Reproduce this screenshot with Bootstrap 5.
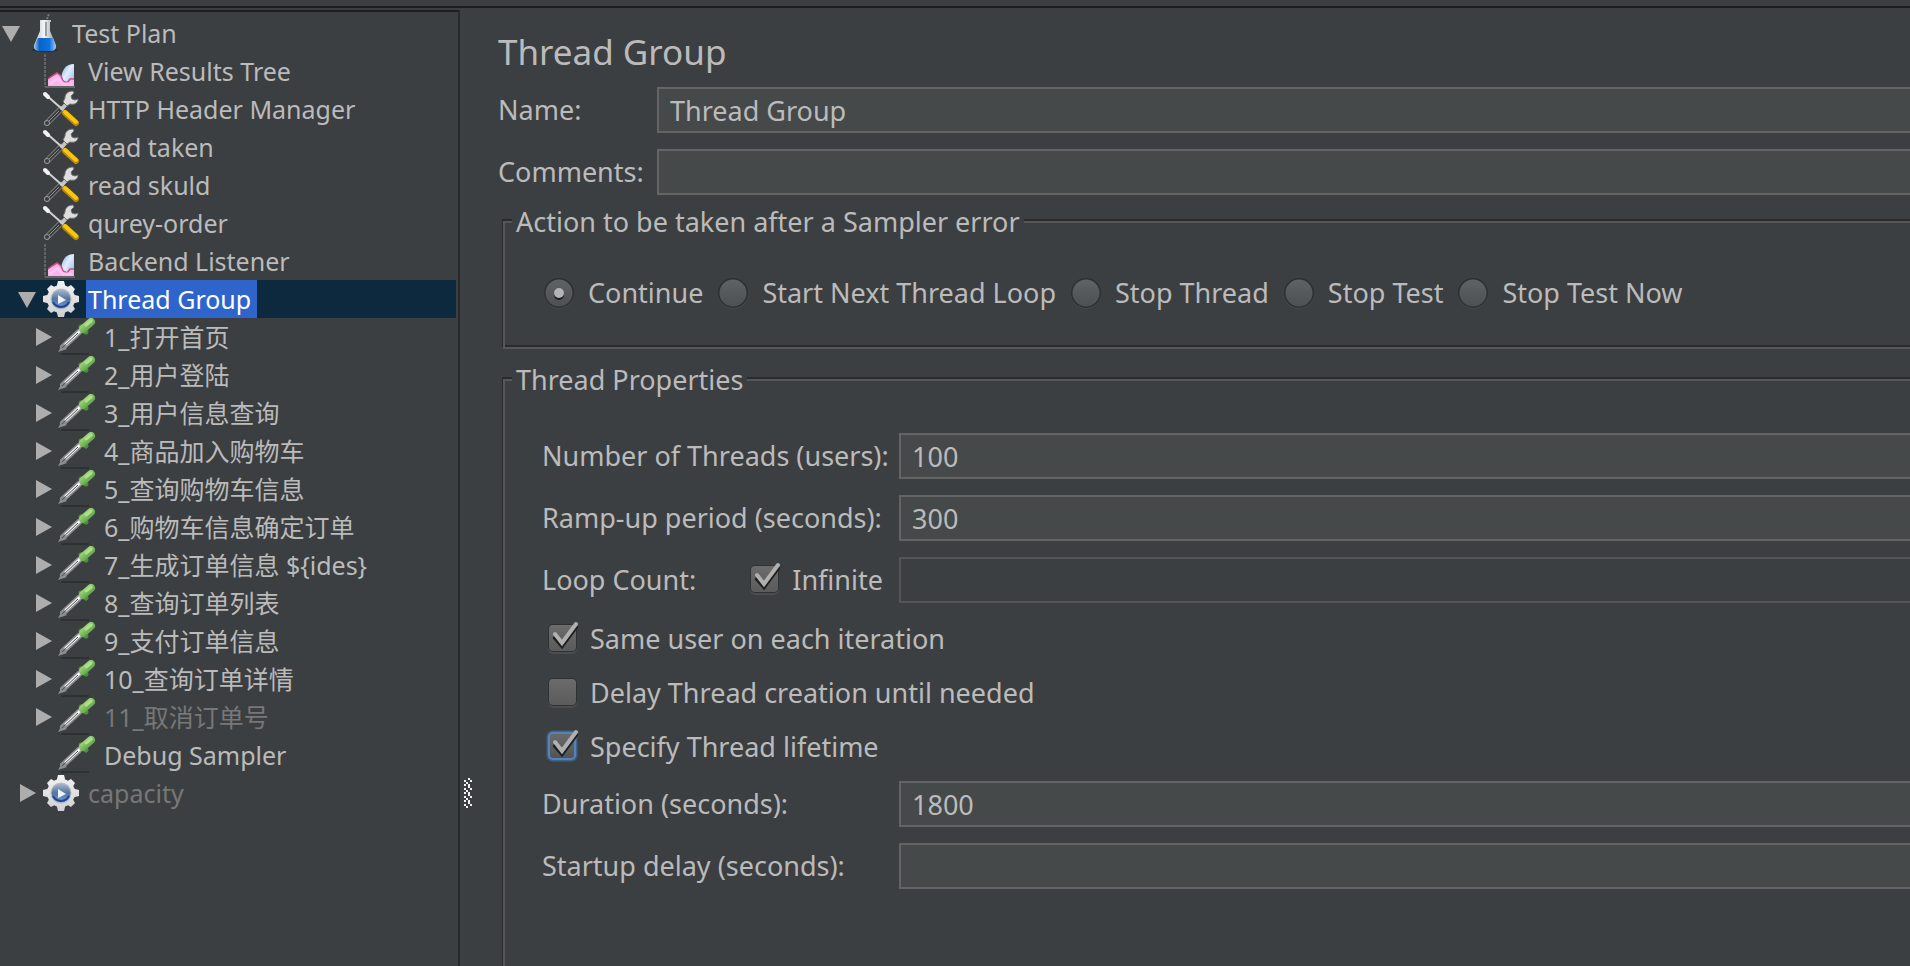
<!DOCTYPE html>
<html lang="en" data-bs-theme="dark">
<head>
<meta charset="utf-8">
<meta name="viewport" content="width=device-width, initial-scale=1">
<title>Thread Group</title>
<link href="https://cdn.jsdelivr.net/npm/bootstrap@5.3.0/dist/css/bootstrap.min.css" rel="stylesheet">
<style>
  :root { --panel: #3c3f41; --ink: #bbbbbb; --field: #45494a; --edge: #646464; --dark: #2b2b2b; --light: #555759; }
  body { background: var(--panel); color: var(--ink); font: 27px/32px "Noto Sans", "Noto Sans CJK SC", sans-serif; }
  .top-rule { height: 8px; border-bottom: 2px solid #1e1e1e; }
  .tree-pane { flex: 0 0 460px; border-top: 2px solid #1e1e1e; border-right: 2px solid #27292a; margin-top: 2px; padding: 2px 2px 0 0; font-size: 25px; }
  .node { height: 38px; }
  .lv1 { padding-left: 16px; }
  .lv2 { padding-left: 32px; }
  .twisty { width: 26px; height: 38px; flex: none; fill: #adadad; }
  .glyph { width: 38px; height: 38px; flex: none; margin-right: 6px; }
  .node-text { padding: 3px 6px 3px 2px; white-space: nowrap; }
  .picked { background: #0d293e; }
  .picked .node-text { background: #2f65ca; color: #fff; }
  .off { color: #777777; }
  .divider { flex: 0 0 38px; padding: 770px 0 0 4px; }
  .divider svg { display: block; }
  h1 { color: var(--ink); font-size: 35px; line-height: 44px; margin: 0 0 13px; font-weight: 400; }
  .form-control, .form-control:disabled { height: 46px; background: var(--field); border: 2px solid var(--edge); border-right: 0; border-radius: 0; color: var(--ink); font-size: 27px; line-height: 32px; padding: 0 11px; }
  .form-control:disabled { background: var(--panel); border-color: #555555; }
  .head-label { flex: 0 0 159px; }
  .prop-label { flex: 0 0 357px; white-space: nowrap; }
  .stack { display: flex; flex-direction: column; gap: 16px; }
  .settings { padding-top: 22px; }
  .etched { margin: 7px 0 0 4px; border-top: 2px solid var(--dark); border-left: 1px solid var(--dark); border-bottom: 2px solid var(--light); box-shadow: inset 2px 2px var(--light), inset 0 -2px var(--dark); }
  .etched.open-end { margin-top: 11px; border-bottom: 0; box-shadow: inset 2px 2px var(--light); }
  .etched legend { float: none; width: auto; margin: 0 0 0 9px; padding: 4px 4px 0; font-size: 27px; line-height: 32px; background: var(--panel); }
  .actions { padding: 34px 0 33px 41px; gap: 15px; }
  .choice { gap: 12px; white-space: nowrap; }
  .actions .choice { gap: 14px; }
  .props { padding: 37px 0 40px 39px; }
  .checks { padding: 9px 0 7px 4px; }
  .checks .choice { height: 54px; }
  input[type=radio], input[type=checkbox] { appearance: none; flex: none; margin: 0; }
  input[type=radio] { width: 30px; height: 42px; background: url("data:image/svg+xml,%3Csvg xmlns='http://www.w3.org/2000/svg' viewBox='0 0 30 42'%3E%3Cdefs%3E%3ClinearGradient id='g' x2='0' y2='1'%3E%3Cstop stop-color='%23606365'/%3E%3Cstop offset='1' stop-color='%234b5053'/%3E%3C/linearGradient%3E%3C/defs%3E%3Ccircle cx='15' cy='22' r='15' fill='%23484b4d'/%3E%3Ccircle cx='15' cy='21' r='15' fill='%232d2f30'/%3E%3Ccircle cx='15' cy='21' r='13.5' fill='url(%23g)'/%3E%3C/svg%3E"); }
  input[type=radio]:checked { background: url("data:image/svg+xml,%3Csvg xmlns='http://www.w3.org/2000/svg' viewBox='0 0 30 42'%3E%3Cdefs%3E%3ClinearGradient id='g' x2='0' y2='1'%3E%3Cstop stop-color='%23606365'/%3E%3Cstop offset='1' stop-color='%234b5053'/%3E%3C/linearGradient%3E%3C/defs%3E%3Ccircle cx='15' cy='22' r='15' fill='%23484b4d'/%3E%3Ccircle cx='15' cy='21' r='15' fill='%232d2f30'/%3E%3Ccircle cx='15' cy='21' r='13.5' fill='url(%23g)'/%3E%3Ccircle cx='15' cy='23' r='5' fill='%231e1e1e'/%3E%3Ccircle cx='15' cy='21' r='5' fill='%23b4b4b4'/%3E%3C/svg%3E"); }
  input[type=checkbox] { width: 32px; height: 38px; background: url("data:image/svg+xml,%3Csvg xmlns='http://www.w3.org/2000/svg' viewBox='0 0 32 38'%3E%3Cdefs%3E%3ClinearGradient id='g' x2='0' y2='1'%3E%3Cstop stop-color='%236b6b6b'/%3E%3Cstop offset='1' stop-color='%235b5b5b'/%3E%3C/linearGradient%3E%3C/defs%3E%3Crect x='2' y='6' width='29' height='28' rx='5' fill='%234b4d4f'/%3E%3Crect x='2' y='4' width='29' height='28' rx='5' fill='%232f3132'/%3E%3Crect x='3' y='5' width='27' height='26' rx='4' fill='url(%23g)'/%3E%3C/svg%3E"); }
  input[type=checkbox]:checked { background: url("data:image/svg+xml,%3Csvg xmlns='http://www.w3.org/2000/svg' viewBox='0 0 32 38'%3E%3Cdefs%3E%3ClinearGradient id='g' x2='0' y2='1'%3E%3Cstop stop-color='%236b6b6b'/%3E%3Cstop offset='1' stop-color='%235b5b5b'/%3E%3C/linearGradient%3E%3C/defs%3E%3Crect x='2' y='6' width='29' height='28' rx='5' fill='%234b4d4f'/%3E%3Crect x='2' y='4' width='29' height='28' rx='5' fill='%232f3132'/%3E%3Crect x='3' y='5' width='27' height='26' rx='4' fill='url(%23g)'/%3E%3Cg fill='none' stroke-width='4' stroke-linecap='round'%3E%3Cpath d='M9 18l7 8L30 7' stroke='%231e1e1e'/%3E%3Cpath d='M9 14l7 9L30 4' stroke='%23b0b0b0'/%3E%3C/g%3E%3C/svg%3E"); }
  input[type=checkbox].focused { background: url("data:image/svg+xml,%3Csvg xmlns='http://www.w3.org/2000/svg' viewBox='0 0 32 38'%3E%3Cdefs%3E%3ClinearGradient id='g' x2='0' y2='1'%3E%3Cstop stop-color='%236b6b6b'/%3E%3Cstop offset='1' stop-color='%23505356'/%3E%3C/linearGradient%3E%3C/defs%3E%3Crect x='0' y='2' width='32' height='32' rx='7' fill='%233e5066'/%3E%3Crect x='1' y='3' width='30' height='30' rx='6' fill='%233f638c'/%3E%3Crect x='3' y='5' width='26' height='26' rx='4' fill='url(%23g)' stroke='%235583b5' stroke-width='2'/%3E%3Cg fill='none' stroke-width='4' stroke-linecap='round'%3E%3Cpath d='M9 18l7 8L30 7' stroke='%231e1e1e'/%3E%3Cpath d='M9 14l7 9L30 4' stroke='%23b0b0b0'/%3E%3C/g%3E%3C/svg%3E"); }
</style>
</head>
<body class="vh-100 overflow-hidden d-flex flex-column">
<svg class="position-absolute" width="0" height="0" aria-hidden="true">
  <defs>
    <linearGradient id="glass" x2="1"><stop stop-color="#a9b6c4"/><stop offset=".45" stop-color="#f4f6f8"/><stop offset="1" stop-color="#8f9499"/></linearGradient>
    <linearGradient id="liquid" x2="1"><stop stop-color="#9fc6f5"/><stop offset=".25" stop-color="#0a63c4"/><stop offset=".7" stop-color="#0c74dd"/><stop offset="1" stop-color="#a5c8f2"/></linearGradient>
    <linearGradient id="sky" x2="1" y2="1"><stop stop-color="#7fa8e6"/><stop offset=".45" stop-color="#e2eeff"/><stop offset="1" stop-color="#86aee8"/></linearGradient>
    <linearGradient id="metal" gradientUnits="userSpaceOnUse" x1="0" x2="0" y1="0" y2="38"><stop stop-color="#f4f4f4"/><stop offset="1" stop-color="#cfcfcf"/></linearGradient>
    <linearGradient id="lens" x2="0" y2="1"><stop stop-color="#a9b8cf"/><stop offset=".5" stop-color="#54749f"/><stop offset="1" stop-color="#6e9be6"/></linearGradient>
    <linearGradient id="bulb" x2="1" y2="1"><stop stop-color="#a6dc80"/><stop offset="1" stop-color="#5a9f43"/></linearGradient>
  </defs>
  <symbol id="open" viewBox="0 0 26 38"><path d="M2 12h18L11 28z"/></symbol>
  <symbol id="shut" viewBox="0 0 26 38"><path d="M4 10v18l16-9z"/></symbol>
  <symbol id="flask" viewBox="0 0 38 38">
    <ellipse cx="19" cy="36" rx="13" ry="2" fill="#2b2e30"/>
    <path d="M21 5l2-5" stroke="#77797b" stroke-width="2" stroke-dasharray="2 1"/>
    <path d="M14 6h11v2h-1v9l6 14q1 5-4 5H12q-5 0-4-5l6-14V8z" fill="url(#glass)"/>
    <path d="M12 24h15l3 8q0 5-5 5H13q-5 0-5-5z" fill="url(#liquid)"/>
    <path d="M20 8v14" stroke="#9a9fa4" stroke-width="2"/>
  </symbol>
  <symbol id="chart" viewBox="0 0 38 38">
    <path d="M3 2v33" stroke="#626466" stroke-width="2" stroke-dasharray="3 1"/><path d="M3 35h30" stroke="#626466" stroke-width="2"/>
    <path d="M19 28q1-16 13-16v22H21z" fill="url(#sky)"/>
    <path d="M6 34v-7l4-3 5-3 4 3 2 5 4 1 3-3h4v7z" fill="#f5b5ec"/>
    <path d="M6 27l4-3 5-3 4 3 2 5 4 2 3-4h4" fill="none" stroke="#d34a86" stroke-width="1.5"/>
    <path d="M8 32l8-6 5 6h9" fill="none" stroke="#fbc4f2" stroke-width="3"/>
  </symbol>
  <symbol id="tools" viewBox="0 0 38 38">
    <path d="M5 33l14-14" stroke="#858585" stroke-width="6" stroke-linecap="round"/>
    <path d="M6 32l13-13" stroke="#3a3c3d" stroke-width="4" stroke-linecap="round"/>
    <path d="M7 31l10-10" stroke="#8f8f8f" stroke-width="1"/>
    <circle cx="5" cy="33" r="2.5" fill="#3a3c3d" stroke="#9a9a9a"/>
    <path d="M19 20l7-8" stroke="#c4c4c4" stroke-width="4"/>
    <path d="M31 1c-5 0-8 3-8 7l-2 4 4 4 3-2c5 1 8-1 8-5l-3 1-3-1-1-3 3-3z" fill="#dedede" stroke="#707070"/>
    <path d="M3 4l17 15" stroke="#cfcfcf" stroke-width="2" stroke-linecap="round"/><path d="M3 4l3 3" stroke="#f2f2f2" stroke-width="4" stroke-linecap="round"/>
    <path d="M23 23l11 10" stroke="#b8870c" stroke-width="6" stroke-linecap="round"/>
    <path d="M23 22l11 10" stroke="#f8c60f" stroke-width="4" stroke-linecap="round"/>
  </symbol>
  <symbol id="gear" viewBox="0 0 38 38">
    <g fill="url(#metal)"><circle cx="19" cy="19" r="14"/>
      <path d="M16 1h6l2 8H14zM16 37h6l2-8H14zM1 16v6l8 2V14zM37 16v6l-8 2V14z"/>
      <path d="M5 9l4-4 7 4-7 7zM33 9l-4-4-7 4 7 7zM5 29l4 4 7-4-7-7zM33 29l-4 4-7-4 7-7z"/></g>
    <circle cx="19" cy="19" r="10.5" fill="#b9bec6"/><circle cx="19" cy="19" r="9.5" fill="url(#lens)"/>
    <path d="M11 22a9 9 0 0 0 16 0" fill="none" stroke="#1f4688" stroke-width="2"/>
    <path d="M16 15v9l8-4z" fill="#eef3fa"/>
  </symbol>
  <symbol id="dropper" viewBox="0 0 38 38">
    <path d="M3 36h28" stroke="#2e3132" stroke-width="2"/>
    <path d="M5 29l16-15" stroke="#8b8d8e" stroke-width="6" stroke-linecap="round"/>
    <path d="M0 34l4-7 5 4z" fill="#8b8d8e"/>
    <path d="M8 26l14-13" stroke="#f5f5f5" stroke-width="3" stroke-linecap="round"/>
    <path d="M4 30l16-15" stroke="#4a4c4d"/>
    <path d="M23 9l5 5" stroke="#4b9140" stroke-width="5" stroke-linecap="round"/>
    <path d="M25 11l8-7" stroke="url(#bulb)" stroke-width="8" stroke-linecap="round"/>
    <path d="M28 7l5-4" stroke="#aee08c" stroke-width="3" stroke-linecap="round"/>
  </symbol>
</svg>

<div class="top-rule flex-shrink-0"></div>
<div class="d-flex flex-grow-1">
  <nav class="tree-pane" aria-label="Test plan">
    <ul class="list-unstyled m-0">
      <li class="node d-flex align-items-center"><svg class="twisty"><use href="#open"/></svg><svg class="glyph"><use href="#flask"/></svg><span class="node-text">Test Plan</span></li>
      <li class="node lv1 d-flex align-items-center"><span class="twisty"></span><svg class="glyph"><use href="#chart"/></svg><span class="node-text">View Results Tree</span></li>
      <li class="node lv1 d-flex align-items-center"><span class="twisty"></span><svg class="glyph"><use href="#tools"/></svg><span class="node-text">HTTP Header Manager</span></li>
      <li class="node lv1 d-flex align-items-center"><span class="twisty"></span><svg class="glyph"><use href="#tools"/></svg><span class="node-text">read taken</span></li>
      <li class="node lv1 d-flex align-items-center"><span class="twisty"></span><svg class="glyph"><use href="#tools"/></svg><span class="node-text">read skuld</span></li>
      <li class="node lv1 d-flex align-items-center"><span class="twisty"></span><svg class="glyph"><use href="#tools"/></svg><span class="node-text">qurey-order</span></li>
      <li class="node lv1 d-flex align-items-center"><span class="twisty"></span><svg class="glyph"><use href="#chart"/></svg><span class="node-text">Backend Listener</span></li>
      <li class="node lv1 picked d-flex align-items-center"><svg class="twisty"><use href="#open"/></svg><svg class="glyph"><use href="#gear"/></svg><span class="node-text">Thread Group</span></li>
      <li class="node lv2 d-flex align-items-center"><svg class="twisty"><use href="#shut"/></svg><svg class="glyph"><use href="#dropper"/></svg><span class="node-text" lang="zh">1_打开首页</span></li>
      <li class="node lv2 d-flex align-items-center"><svg class="twisty"><use href="#shut"/></svg><svg class="glyph"><use href="#dropper"/></svg><span class="node-text" lang="zh">2_用户登陆</span></li>
      <li class="node lv2 d-flex align-items-center"><svg class="twisty"><use href="#shut"/></svg><svg class="glyph"><use href="#dropper"/></svg><span class="node-text" lang="zh">3_用户信息查询</span></li>
      <li class="node lv2 d-flex align-items-center"><svg class="twisty"><use href="#shut"/></svg><svg class="glyph"><use href="#dropper"/></svg><span class="node-text" lang="zh">4_商品加入购物车</span></li>
      <li class="node lv2 d-flex align-items-center"><svg class="twisty"><use href="#shut"/></svg><svg class="glyph"><use href="#dropper"/></svg><span class="node-text" lang="zh">5_查询购物车信息</span></li>
      <li class="node lv2 d-flex align-items-center"><svg class="twisty"><use href="#shut"/></svg><svg class="glyph"><use href="#dropper"/></svg><span class="node-text" lang="zh">6_购物车信息确定订单</span></li>
      <li class="node lv2 d-flex align-items-center"><svg class="twisty"><use href="#shut"/></svg><svg class="glyph"><use href="#dropper"/></svg><span class="node-text" lang="zh">7_生成订单信息 ${ides}</span></li>
      <li class="node lv2 d-flex align-items-center"><svg class="twisty"><use href="#shut"/></svg><svg class="glyph"><use href="#dropper"/></svg><span class="node-text" lang="zh">8_查询订单列表</span></li>
      <li class="node lv2 d-flex align-items-center"><svg class="twisty"><use href="#shut"/></svg><svg class="glyph"><use href="#dropper"/></svg><span class="node-text" lang="zh">9_支付订单信息</span></li>
      <li class="node lv2 d-flex align-items-center"><svg class="twisty"><use href="#shut"/></svg><svg class="glyph"><use href="#dropper"/></svg><span class="node-text" lang="zh">10_查询订单详情</span></li>
      <li class="node lv2 d-flex align-items-center"><svg class="twisty"><use href="#shut"/></svg><svg class="glyph"><use href="#dropper"/></svg><span class="node-text off" lang="zh">11_取消订单号</span></li>
      <li class="node lv2 d-flex align-items-center"><span class="twisty"></span><svg class="glyph"><use href="#dropper"/></svg><span class="node-text">Debug Sampler</span></li>
      <li class="node lv1 d-flex align-items-center"><svg class="twisty"><use href="#shut"/></svg><svg class="glyph"><use href="#gear"/></svg><span class="node-text off">capacity</span></li>
    </ul>
  </nav>
  <div class="divider">
    <svg width="8" height="30" aria-hidden="true">
      <defs><pattern id="grip" width="8" height="8" patternUnits="userSpaceOnUse"><path fill="#f2f2f2" d="M4 0h2v2h-2zM0 2h2v2h-2zM6 2h2v2h-2zM2 4h2v2h-2zM0 6h2v2h-2zM4 6h2v2h-2z"/></pattern></defs>
      <rect width="8" height="30" fill="url(#grip)"/>
    </svg>
  </div>
  <main class="flex-grow-1 d-flex flex-column" style="min-width:0">
    <form class="settings flex-grow-1 d-flex flex-column">
      <h1>Thread Group</h1>
      <div class="stack">
        <div class="d-flex align-items-center"><label class="head-label" for="name">Name:</label><input id="name" class="form-control" value="Thread Group"></div>
        <div class="d-flex align-items-center"><label class="head-label" for="comments">Comments:</label><input id="comments" class="form-control"></div>
      </div>
      <fieldset class="etched">
        <legend>Action to be taken after a Sampler error</legend>
        <div class="actions d-flex align-items-center">
          <div class="choice d-flex align-items-center"><input type="radio" name="act" id="a1" checked><label for="a1">Continue</label></div>
          <div class="choice d-flex align-items-center"><input type="radio" name="act" id="a2"><label for="a2">Start Next Thread Loop</label></div>
          <div class="choice d-flex align-items-center"><input type="radio" name="act" id="a3"><label for="a3">Stop Thread</label></div>
          <div class="choice d-flex align-items-center"><input type="radio" name="act" id="a4"><label for="a4">Stop Test</label></div>
          <div class="choice d-flex align-items-center"><input type="radio" name="act" id="a5"><label for="a5">Stop Test Now</label></div>
        </div>
      </fieldset>
      <fieldset class="etched open-end flex-grow-1">
        <legend>Thread Properties</legend>
        <div class="props">
          <div class="stack">
            <div class="d-flex align-items-center"><label class="prop-label" for="threads">Number of Threads (users):</label><input id="threads" class="form-control" value="100"></div>
            <div class="d-flex align-items-center"><label class="prop-label" for="ramp">Ramp-up period (seconds):</label><input id="ramp" class="form-control" value="300"></div>
            <div class="d-flex align-items-center">
              <div class="prop-label d-flex justify-content-between align-items-center"><label for="loops">Loop Count:</label><div class="choice d-flex align-items-center pe-3"><input type="checkbox" id="inf" checked><label for="inf">Infinite</label></div></div>
              <input id="loops" class="form-control" disabled>
            </div>
          </div>
          <div class="checks">
            <div class="choice d-flex align-items-center"><input type="checkbox" id="c1" checked><label for="c1">Same user on each iteration</label></div>
            <div class="choice d-flex align-items-center"><input type="checkbox" id="c2"><label for="c2">Delay Thread creation until needed</label></div>
            <div class="choice d-flex align-items-center"><input type="checkbox" class="focused" id="c3" checked><label for="c3">Specify Thread lifetime</label></div>
          </div>
          <div class="stack">
            <div class="d-flex align-items-center"><label class="prop-label" for="duration">Duration (seconds):</label><input id="duration" class="form-control" value="1800"></div>
            <div class="d-flex align-items-center"><label class="prop-label" for="delay">Startup delay (seconds):</label><input id="delay" class="form-control"></div>
          </div>
        </div>
      </fieldset>
    </form>
  </main>
</div>
<script src="https://cdn.jsdelivr.net/npm/bootstrap@5.3.0/dist/js/bootstrap.bundle.min.js"></script>
</body>
</html>
